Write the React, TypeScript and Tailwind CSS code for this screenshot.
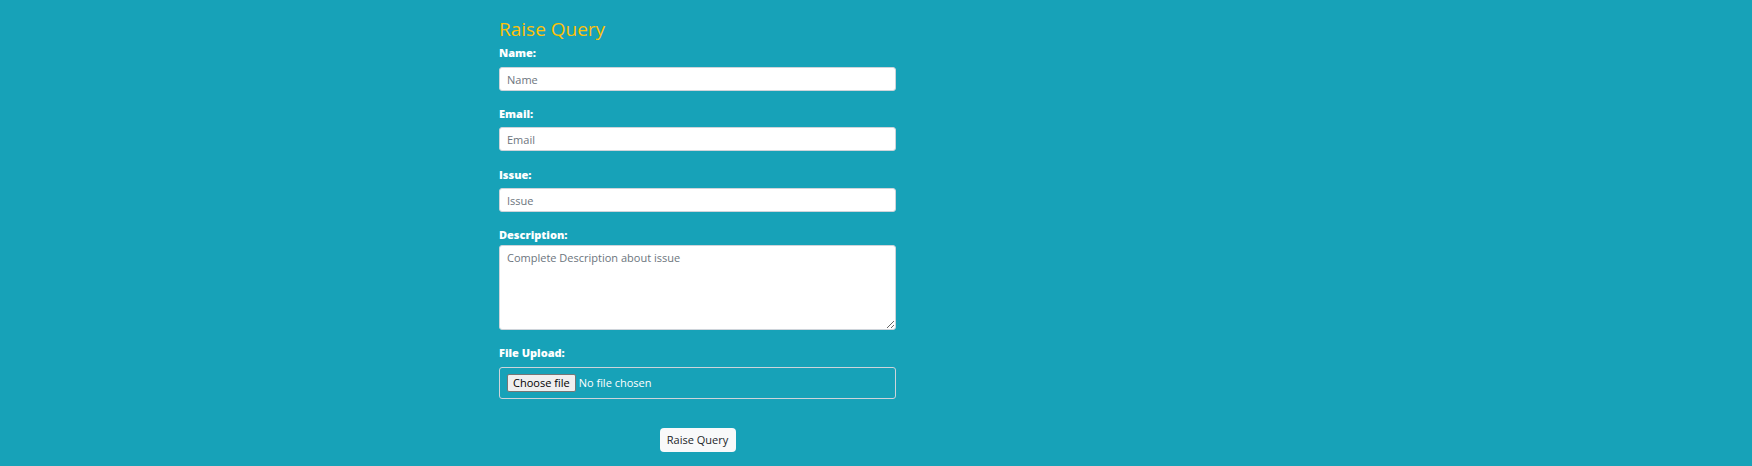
import React from "react";

export default function App() {
  return (
    <div className="min-h-screen w-full bg-[#17a2b8] font-['Open_Sans','Noto_Sans',sans-serif]">
      <form
        className="ml-[499px] w-[397px] pt-[17px]"
        onSubmit={(e) => e.preventDefault()}
      >
        <h4 className="mb-[4px] h-[24px] text-[19px] leading-[24px] font-medium text-[#ffc107]">
          Raise Query
        </h4>

        <div className="mb-[15px]">
          <label className="mb-[6px] block h-[16px] text-[11px] leading-[16px] font-extrabold text-white">
            Name:
          </label>
          <input
            type="text"
            placeholder="Name"
            className="block h-[24px] w-full rounded-[3px] border border-[#ced4da] bg-white px-[7px] text-[11px] text-[#495057] placeholder:text-[#6c757d] outline-none"
          />
        </div>

        <div className="mb-[16px]">
          <label className="mb-[5px] block h-[16px] text-[11px] leading-[16px] font-extrabold text-white">
            Email:
          </label>
          <input
            type="email"
            placeholder="Email"
            className="block h-[24px] w-full rounded-[3px] border border-[#ced4da] bg-white px-[7px] text-[11px] text-[#495057] placeholder:text-[#6c757d] outline-none"
          />
        </div>

        <div className="mb-[15px]">
          <label className="mb-[5px] block h-[16px] text-[11px] leading-[16px] font-extrabold text-white">
            Issue:
          </label>
          <input
            type="text"
            placeholder="Issue"
            className="block h-[24px] w-full rounded-[3px] border border-[#ced4da] bg-white px-[7px] text-[11px] text-[#495057] placeholder:text-[#6c757d] outline-none"
          />
        </div>

        <div className="mb-[15px]">
          <label className="mb-[2px] block h-[16px] text-[11px] leading-[16px] font-extrabold text-white">
            Description:
          </label>
          <textarea
            placeholder="Complete Description about issue"
            className="block h-[85px] w-full rounded-[3px] border border-[#ced4da] bg-white px-[7px] py-[4px] text-[11px] leading-[16px] text-[#495057] placeholder:text-[#6c757d] outline-none"
          />
        </div>

        <div className="mb-[29px]">
          <span className="mb-[6px] block h-[16px] text-[11px] leading-[16px] font-extrabold text-white">
            File Upload:
          </span>
          <label className="flex h-[32px] w-full cursor-pointer items-center rounded-[3px] border border-[#ced4da] px-[7px]">
            <input type="file" className="hidden" />
            <span className="mr-[3px] flex h-[18px] items-center rounded-[2px] border border-[#767676] bg-[#efefef] px-[5px] text-[11px] text-black">
              Choose file
            </span>
            <span className="text-[11px] text-white">No file chosen</span>
          </label>
        </div>

        <div className="flex justify-center">
          <button
            type="submit"
            className="h-[24px] w-[76px] rounded-[4px] bg-[#f8f9fa] text-[11px] text-[#212529]"
          >
            Raise Query
          </button>
        </div>
      </form>
    </div>
  );
}
